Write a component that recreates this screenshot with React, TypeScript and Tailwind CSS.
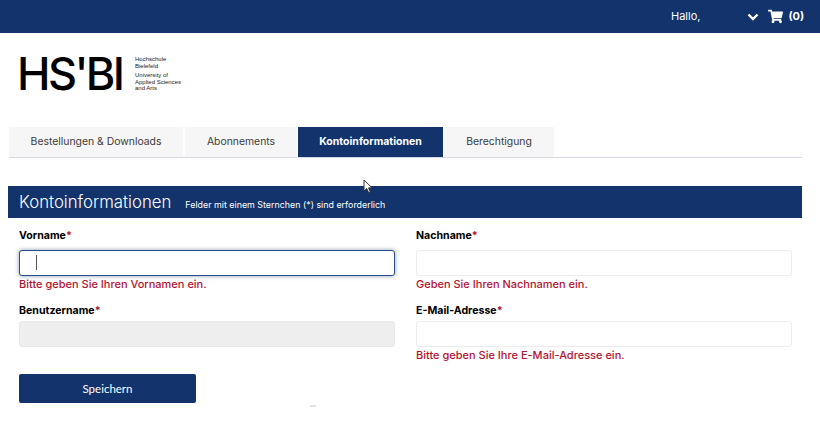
import React from "react";
import { FaShoppingCart } from "react-icons/fa";

const sans = "font-['Inter','Liberation_Sans',sans-serif]";

function Tab({ label, active, className }: { label: string; active?: boolean; className: string }) {
  return (
    <div
      className={
        active
          ? `flex h-[30px] items-center justify-center bg-[#12336b] text-[10.5px] font-bold text-white ${className}`
          : `flex h-[30px] items-center justify-center bg-[#f6f6f6] text-[10.4px] text-[#3c3c3c] ${className}`
      }
    >
      {label}
    </div>
  );
}

function Field({
  label,
  error,
  focused,
  disabled,
  gap,
}: {
  label: string;
  error?: string;
  focused?: boolean;
  disabled?: boolean;
  gap: string;
}) {
  let box = "border-[#ececec] bg-white";
  if (focused) box = "border-[#2c4f8c] bg-white shadow-[0_0_4px_rgba(18,51,107,0.5)]";
  if (disabled) box = "border-[#e8e8e8] bg-[#eeeeee]";
  return (
    <div className="flex h-[75px] flex-col">
      <div className="h-[15px] text-[10.6px] leading-[15px] font-bold text-black">
        {label}
        <span className="text-[#b5122f]">*</span>
      </div>
      <div className={`relative h-[26px] rounded-[3px] border ${gap} ${box}`}>
        {focused && <div className="absolute top-[4px] left-[16px] h-[15px] w-px bg-[#555]" />}
      </div>
      {error && (
        <div className="mt-px text-[11px] leading-[15px] font-medium text-[#b5122f]">{error}</div>
      )}
    </div>
  );
}

export default function App() {
  return (
    <div className={`relative h-[422px] w-[820px] overflow-hidden bg-white ${sans}`}>
      <header className="flex h-[33px] items-center bg-[#12336b] text-white">
        <span className="ml-[671px] text-[11px]">Hallo,</span>
        <svg className="ml-[47px]" width="12" height="8" viewBox="0 0 12 8">
          <path d="M1.5 1.5 6 6l4.5-4.5" fill="none" stroke="white" strokeWidth="2.4" />
        </svg>
        <FaShoppingCart className="ml-[9px] text-[15px]" />
        <span className="ml-[5px] text-[11px] font-bold">(0)</span>
      </header>

      <div className="ml-[17px] flex h-[94px] items-start pt-[16px]">
        <div className="w-[118px] text-[45px] leading-[50px] font-medium tracking-[-2.6px] text-black">HS'BI</div>
        <div className="mt-[7px] font-['Liberation_Sans',sans-serif] text-[6px] leading-[6.5px] text-[#222]">
          <div>Hochschule</div>
          <div>Bielefeld</div>
          <div className="mt-[3px]">University of</div>
          <div>Applied Sciences</div>
          <div>and Arts</div>
        </div>
      </div>

      <nav className="ml-[9px] flex w-[793px] border-b border-[#d4d8e2]">
        <Tab label="Bestellungen & Downloads" className="w-[174px]" />
        <Tab label="Abonnements" className="ml-[2px] w-[112px]" />
        <Tab label="Kontoinformationen" active className="ml-px w-[145px]" />
        <Tab label="Berechtigung" className="ml-px w-[110px]" />
      </nav>

      <section className="mt-[28px] ml-[8px] flex h-[32px] w-[794px] items-center bg-[#12336b] pl-[11px] text-white">
        <span className="mt-[2px] text-[16.8px] font-light">Kontoinformationen</span>
        <span className="mt-[5px] ml-[14px] text-[8.9px]">Felder mit einem Sternchen (*) sind erforderlich</span>
      </section>

      <form className="mt-[10px] ml-[19px] grid w-[773px] grid-cols-[376px_376px] gap-x-[21px]">
        <Field label="Vorname" focused gap="mt-[7px]" error="Bitte geben Sie Ihren Vornamen ein." />
        <Field label="Nachname" gap="mt-[7px]" error="Geben Sie Ihren Nachnamen ein." />
        <Field label="Benutzername" gap="mt-[3px]" disabled />
        <Field label="E-Mail-Adresse" gap="mt-[3px]" error="Bitte geben Sie Ihre E-Mail-Adresse ein." />
        <button
          type="button"
          className="mt-[-4px] h-[29px] w-[177px] rounded-[2px] bg-[#12336b] font-['Lato',sans-serif] text-[11.5px] text-white"
        >
          Speichern
        </button>
      </form>

      {/* mouse pointer and the small speck under the form are part of the capture */}
      <svg className="absolute top-[179px] left-[363px]" width="11" height="15" viewBox="0 0 11 15">
        <path d="M1 1v11l2.8-2.4 1.8 4 1.7-.8-1.8-3.9h3.6z" fill="white" stroke="#333" strokeWidth="1" />
      </svg>
      <div className="absolute top-[405px] left-[310px] h-[2px] w-[6px] bg-[#e4e4e4]" />
    </div>
  );
}
